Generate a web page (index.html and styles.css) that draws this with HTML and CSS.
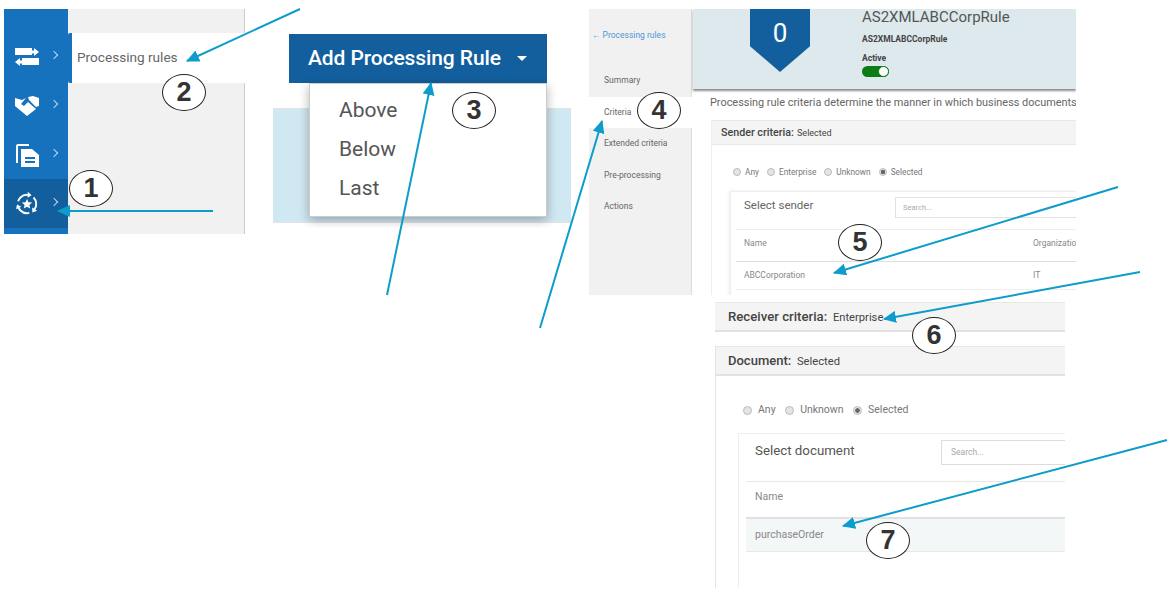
FILE: index.html
```html
<!DOCTYPE html>
<html lang="en">
<head>
  <meta charset="UTF-8">
  <meta name="viewport" content="width=device-width, initial-scale=1.0">
  <title>Processing rule steps</title>
  <link rel="stylesheet" href="styles.css">
</head>
<body>

<!-- shot 1: side navigation -->
<div class="shot shot-nav">
  <div class="rail">
    <div class="rail-item">
      <svg class="rail-icon" viewBox="0 0 24 20"><path d="M0 1h17v2.500h2V1l5 4-5 4V6.500h-2V8H0zM24 11v7H7v-1.500H5V19l-5-4 5-4v2.500h2V11z" fill="#fff"/></svg>
      <span class="chev"></span>
    </div>
    <div class="rail-item">
      <svg class="rail-icon" viewBox="0 0 24 20"><path d="M0 2L7 4L11 2L6 8L9 10L13 6L21 13L12 20L0 10zM13 1L18 0L24 2V10L21 11L14 4z" fill="#fff"/></svg>
      <span class="chev"></span>
    </div>
    <div class="rail-item">
      <svg class="rail-icon" viewBox="0 0 24 24"><path d="M1 20V3a2 2 0 0 1 2-2h11v2H3v17z" fill="#fff"/><path d="M6 6h11l7 6v12H6z" fill="#fff"/><path d="M10 14h10v2H10zM10 18h10v2H10z" fill="#1672bd"/></svg>
      <span class="chev"></span>
    </div>
    <div class="rail-item is-active">
      <svg class="rail-icon" viewBox="-1 -1 26 26">
        <circle cx="12" cy="12" r="10" fill="none" stroke="#fff" stroke-width="2" stroke-dasharray="14 6.940" transform="rotate(-45 12 12)"/>
        <g fill="#fff">
          <path d="M12.900 -1.200L17 2.400L12.600 5.200z"/>
          <path d="M12.900 -1.200L17 2.400L12.600 5.200z" transform="rotate(120 12 12)"/>
          <path d="M12.900 -1.200L17 2.400L12.600 5.200z" transform="rotate(240 12 12)"/>
          <path d="M12 6.500l1.600 3.700 4 .3-3 2.600 .9 3.900-3.500-2.100-3.500 2.100 .9-3.900-3-2.600 4-.3z"/>
        </g>
      </svg>
      <span class="chev"></span>
    </div>
  </div>
  <div class="subnav">
    <div class="subnav-tab">Processing rules</div>
  </div>
</div>

<!-- shot 2: add rule menu -->
<div class="shot shot-add">
  <div class="add-band"></div>
  <button class="add-btn">Add Processing Rule<span class="caret"></span></button>
  <ul class="add-menu">
    <li>Above</li>
    <li>Below</li>
    <li>Last</li>
  </ul>
</div>

<!-- shot 3: rule criteria, sender -->
<div class="shot shot-rule">
  <div class="rule-nav">
    <div class="back"><span class="back-arrow">←</span> Processing rules</div>
    <div class="rule-links">
      <a>Summary</a>
      <a class="is-active">Criteria</a>
      <a>Extended criteria</a>
      <a>Pre-processing</a>
      <a>Actions</a>
    </div>
  </div>
  <div class="rule-main">
    <div class="rule-head">
      <div class="badge"><span>0</span></div>
      <div class="rule-info">
        <div class="rule-title">AS2XMLABCCorpRule</div>
        <div class="rule-sub">AS2XMLABCCorpRule</div>
        <div class="rule-sub rule-active">Active</div>
        <div class="toggle"></div>
      </div>
    </div>
    <p class="rule-desc">Processing rule criteria determine the manner in which business documents</p>
    <div class="section">
      <div class="section-head"><b>Sender criteria:</b> <span>Selected</span></div>
      <div class="radios">
        <label><i class="radio"></i>Any</label>
        <label><i class="radio"></i>Enterprise</label>
        <label><i class="radio"></i>Unknown</label>
        <label><i class="radio is-on"></i>Selected</label>
      </div>
      <div class="picker">
        <div class="picker-top">
          <div class="picker-title">Select sender</div>
          <div class="search">Search...</div>
        </div>
        <div class="picker-row picker-names"><span>Name</span><span class="org">Organization</span></div>
        <div class="picker-row picker-val"><span>ABCCorporation</span><span class="org">IT</span></div>
      </div>
    </div>
  </div>
</div>

<!-- shot 4: receiver and document -->
<div class="shot shot-doc">
  <div class="doc-head doc-receiver"><b>Receiver criteria:</b> <span>Enterprise</span></div>
  <div class="doc-section">
    <div class="doc-head"><b>Document:</b> <span>Selected</span></div>
    <div class="doc-radios">
      <label><i class="radio"></i>Any</label>
      <label><i class="radio"></i>Unknown</label>
      <label><i class="radio is-on"></i>Selected</label>
    </div>
    <div class="doc-picker">
      <div class="doc-top">
        <div class="doc-title">Select document</div>
        <div class="doc-search">Search...</div>
      </div>
      <div class="doc-name">Name</div>
      <div class="doc-val">purchaseOrder</div>
    </div>
  </div>
</div>

<!-- callouts -->
<svg class="arrows" viewBox="0 0 1175 592">
  <defs>
    <marker id="head" markerWidth="6.500" markerHeight="6" refX="6" refY="3" orient="auto" markerUnits="strokeWidth">
      <path d="M0 0L6.500 3L0 6z" fill="#0d9ccb"/>
    </marker>
  </defs>
  <g stroke="#0d9ccb" stroke-width="2" fill="none">
    <line x1="213" y1="211" x2="58" y2="211" marker-end="url(#head)"/>
    <line x1="300" y1="9" x2="187" y2="61" marker-end="url(#head)"/>
    <line x1="387" y1="295" x2="431" y2="83" marker-end="url(#head)"/>
    <line x1="540" y1="328" x2="602" y2="121" marker-end="url(#head)"/>
    <line x1="1118" y1="187" x2="834" y2="273" marker-end="url(#head)"/>
    <line x1="1140" y1="272" x2="884" y2="319" marker-end="url(#head)"/>
    <line x1="1167" y1="440" x2="843" y2="526" marker-end="url(#head)"/>
  </g>
</svg>
<div class="num n1">1</div>
<div class="num n2">2</div>
<div class="num n3">3</div>
<div class="num n4">4</div>
<div class="num n5">5</div>
<div class="num n6">6</div>
<div class="num n7">7</div>

</body>
</html>
```

FILE: styles.css
```css
body, html {
  margin: 0;
  padding: 0;
  width: 1175px;
  height: 592px;
  overflow: hidden;
  background: #fff;
  font-family: Roboto, Arial, sans-serif;
}

/* the page is a slide: pasted screenshots sit on a free canvas */
.shot {
  position: absolute;
  overflow: hidden;
}

.shot-nav {
  left: 4px;
  top: 9px;
  width: 241px;
  height: 225px;
  display: flex;
}

.rail {
  width: 64px;
  background: #1672bd;
  padding-top: 23px;
  box-sizing: border-box;
  flex: none;
}

.rail-item {
  height: 49px;
  display: flex;
  align-items: center;
  padding-left: 11px;
  gap: 13px;
}

.rail-item.is-active {
  background: #135f9e;
}

.rail-icon {
  width: 24px;
  height: 24px;
  flex: none;
}

.chev {
  width: 5px;
  height: 5px;
  border-top: 1px solid #bcd6ec;
  border-right: 1px solid #bcd6ec;
  transform: rotate(45deg);
  margin-left: -1px;
  margin-bottom: 4px;
}

.subnav {
  flex: 1;
  background: #f1f1f1;
  border-right: 1px solid #ccc;
  padding-top: 24px;
}

.subnav-tab {
  height: 50px;
  line-height: 49px;
  background: #fff;
  border-left: 4px solid #1672bd;
  border-radius: 2px 0 0 2px;
  padding-left: 5px;
  font-size: 13.600px;
  color: #666;
  margin-right: -1px;
}

.shot-add {
  left: 273px;
  top: 34px;
  width: 298px;
  height: 194px;
}

.add-band {
  position: absolute;
  left: 0;
  right: 0;
  top: 74px;
  height: 115px;
  background: #d0e8f2;
  border-top: 1px solid #e4e4e4;
  border-bottom: 1px solid #e4e4e4;
  box-sizing: border-box;
}

.add-btn {
  position: absolute;
  left: 16px;
  top: 0;
  width: 258px;
  height: 49px;
  background: #135f9e;
  color: #fff;
  border: none;
  padding: 0 0 2px 19px;
  font-family: inherit;
  font-size: 21px;
  font-weight: 500;
  letter-spacing: -0.1px;
  text-align: left;
  white-space: nowrap;
}

.caret {
  display: inline-block;
  margin-left: 16px;
  vertical-align: middle;
  border-left: 5.500px solid transparent;
  border-right: 5.500px solid transparent;
  border-top: 5px solid #fff;
}

.add-menu {
  position: absolute;
  left: 36px;
  top: 49px;
  width: 238px;
  height: 134px;
  box-sizing: border-box;
  margin: 0;
  padding: 7px 0 0 29px;
  list-style: none;
  background: #fff;
  border: 1px solid #ccc;
  box-shadow: 0 3px 10px rgba(0, 0, 0, 0.3);
  font-size: 21px;
  color: #555;
}

.add-menu li {
  height: 39px;
  line-height: 39px;
}

.shot-rule {
  left: 589px;
  top: 9px;
  width: 487px;
  height: 286px;
  display: flex;
}

.rule-nav {
  width: 102px;
  margin-right: 1px;
  flex: none;
  background: #f1f1f1;
  border-right: 1px solid #ddd;
  font-size: 8.500px;
  color: #666;
}

.back {
  padding: 21px 0 0 3px;
  color: #4f97d3;
  line-height: 11px;
}

.rule-links {
  margin-top: 24px;
}

.rule-links a {
  display: block;
  height: 31.600px;
  line-height: 31.600px;
  padding-left: 15px;
  margin-right: -1px;
}

.rule-links a.is-active {
  background: #fff;
}

.rule-main {
  flex: 1;
  min-width: 0;
  white-space: nowrap;
}

.rule-head {
  height: 80px;
  background: #dde9ed;
  box-shadow: 0 2px 2px rgba(0, 0, 0, 0.45);
  display: flex;
  position: relative;
}

.badge {
  width: 60px;
  height: 63px;
  margin-left: 57px;
  background: #135f9e;
  clip-path: polygon(0 0, 100% 0, 100% 59%, 50% 100%, 0 59%);
  color: #fff;
  font-size: 26px;
  text-align: center;
  line-height: 49px;
  flex: none;
}

.rule-info {
  margin-left: 52px;
  margin-top: -1px;
  color: #444;
}

.rule-title {
  font-size: 15px;
  line-height: 18px;
  color: #555;
}

.rule-sub {
  font-size: 8.500px;
  font-weight: 700;
  margin-top: 8px;
  line-height: 11px;
}

.rule-active {
  margin-top: 8px;
}

.toggle {
  width: 27px;
  height: 11px;
  margin-top: 2px;
  box-sizing: border-box;
  border-radius: 6px;
  background: #0a7d14;
  position: relative;
}

.toggle::after {
  content: "";
  position: absolute;
  right: 0;
  top: 0;
  width: 11px;
  height: 11px;
  box-sizing: border-box;
  border: 1px solid #0a7d14;
  border-radius: 50%;
  background: #fff;
}

.rule-desc {
  margin: 7px 0 0 17px;
  font-size: 10.900px;
  line-height: 14px;
  color: #666;
}

.section {
  margin: 10px 0 0 18px;
  border-left: 1px solid #eee;
}

.section-head {
  height: 25px;
  line-height: 23px;
  background: #f4f4f4;
  border-top: 1px solid #e8e8e8;
  border-bottom: 1px solid #e8e8e8;
  box-sizing: border-box;
  padding-left: 9px;
  font-size: 9px;
  color: #444;
}

.section-head b {
  font-size: 10.700px;
  font-weight: 500;
  margin-right: 1px;
}

.radios {
  display: flex;
  gap: 8px;
  padding: 22px 0 0 21px;
  font-size: 8.300px;
  color: #777;
  line-height: 10px;
}

.radios label {
  display: flex;
  align-items: center;
  gap: 4px;
}

.radio {
  width: 8px;
  height: 8px;
  box-sizing: border-box;
  border: 1px solid #bbb;
  border-radius: 50%;
  background: #e4e4e4;
  display: block;
}

.radio.is-on {
  background: radial-gradient(circle, #666 0 2px, #e4e4e4 2.500px);
}

.picker {
  margin: 14px 0 0 18px;
  border-top: 1px solid #eee;
  border-left: 1px solid #eee;
  box-shadow: -1px 0 3px rgba(0, 0, 0, 0.08);
  height: 110px;
  padding-left: 5px;
}

.picker-top {
  height: 38px;
  display: flex;
  padding: 3px 0 0 8px;
  box-sizing: border-box;
  border-bottom: 1px solid #eee;
}

.picker-title {
  width: 151px;
  flex: none;
  font-size: 11.500px;
  color: #666;
  line-height: 20px;
}

.search {
  width: 190px;
  height: 21px;
  margin-top: 2px;
  box-sizing: border-box;
  border: 1px solid #e2e2e2;
  padding-left: 7px;
  font-size: 7.500px;
  line-height: 19px;
  color: #aaa;
  flex: none;
}

.picker-row {
  display: flex;
  height: 31px;
  line-height: 27px;
  padding-left: 8px;
  font-size: 8.500px;
  color: #888;
  border-bottom: 1px solid #ddd;
}

.picker-val {
  height: 27px;
  border-bottom-color: #eee;
}

.picker-row span:first-child {
  width: 289px;
  flex: none;
}

.shot-doc {
  left: 715px;
  top: 302px;
  width: 350px;
  height: 286px;
  white-space: nowrap;
}

.doc-head {
  height: 30px;
  line-height: 28px;
  background: #f4f4f4;
  border-top: 1px solid #e8e8e8;
  border-bottom: 2px solid #e2e2e2;
  box-sizing: border-box;
  padding-left: 12px;
  font-size: 11.200px;
  color: #444;
}

.doc-head b {
  font-size: 13px;
  font-weight: 500;
  margin-right: 3px;
}

.doc-receiver {
  padding-left: 13px;
}

.doc-receiver b {
  font-size: 13.200px;
  margin-right: 3px;
}

.doc-section {
  margin-top: 14px;
  height: 242px;
  border-left: 1px solid #e4e4e4;
}

.doc-radios {
  display: flex;
  gap: 9.500px;
  padding: 28px 0 0 27px;
  font-size: 10.500px;
  line-height: 12px;
  color: #777;
}

.doc-radios label {
  display: flex;
  align-items: center;
  gap: 6px;
}

.doc-radios .radio {
  width: 9px;
  height: 9px;
}

.doc-picker {
  margin: 17px 0 0 22px;
  height: 160px;
  border-top: 1px solid #eee;
  border-left: 1px solid #eee;
  padding-left: 7px;
}

.doc-top {
  height: 48px;
  display: flex;
  padding: 7px 0 0 9px;
  box-sizing: border-box;
  border-bottom: 1px solid #e8e8e8;
}

.doc-title {
  width: 186px;
  flex: none;
  font-size: 13.300px;
  line-height: 20px;
  color: #555;
}

.doc-search {
  width: 130px;
  height: 25px;
  margin-top: -1px;
  flex: none;
  box-sizing: border-box;
  border: 1px solid #ddd;
  padding-left: 9px;
  font-size: 8.500px;
  line-height: 23px;
  color: #aaa;
}

.doc-name {
  height: 37px;
  line-height: 30px;
  padding-left: 9px;
  box-sizing: border-box;
  font-size: 10.500px;
  color: #888;
  border-bottom: 2px solid #e2e2e2;
}

.doc-val {
  height: 33px;
  line-height: 32px;
  padding-left: 9px;
  box-sizing: border-box;
  font-size: 10.500px;
  color: #888;
  background: #f3f7f8;
  border-bottom: 1px solid #e8e8e8;
}

.arrows {
  position: absolute;
  left: 0;
  top: 0;
  width: 1175px;
  height: 592px;
}

/* numbered callouts */
.num {
  position: absolute;
  width: 44px;
  height: 37px;
  box-sizing: border-box;
  border: 1.500px solid #222;
  border-radius: 50%;
  background: #fff;
  font-family: "Liberation Sans", Arial, sans-serif;
  font-weight: 700;
  font-size: 27px;
  line-height: 34px;
  text-align: center;
  color: #333;
}

.n1 { left: 69px; top: 170px; }
.n2 { left: 162px; top: 74px; }
.n3 { left: 452px; top: 92px; }
.n4 { left: 637px; top: 92px; }
.n5 { left: 838px; top: 224px; }
.n6 { left: 912px; top: 317px; }
.n7 { left: 866px; top: 522px; }
```
